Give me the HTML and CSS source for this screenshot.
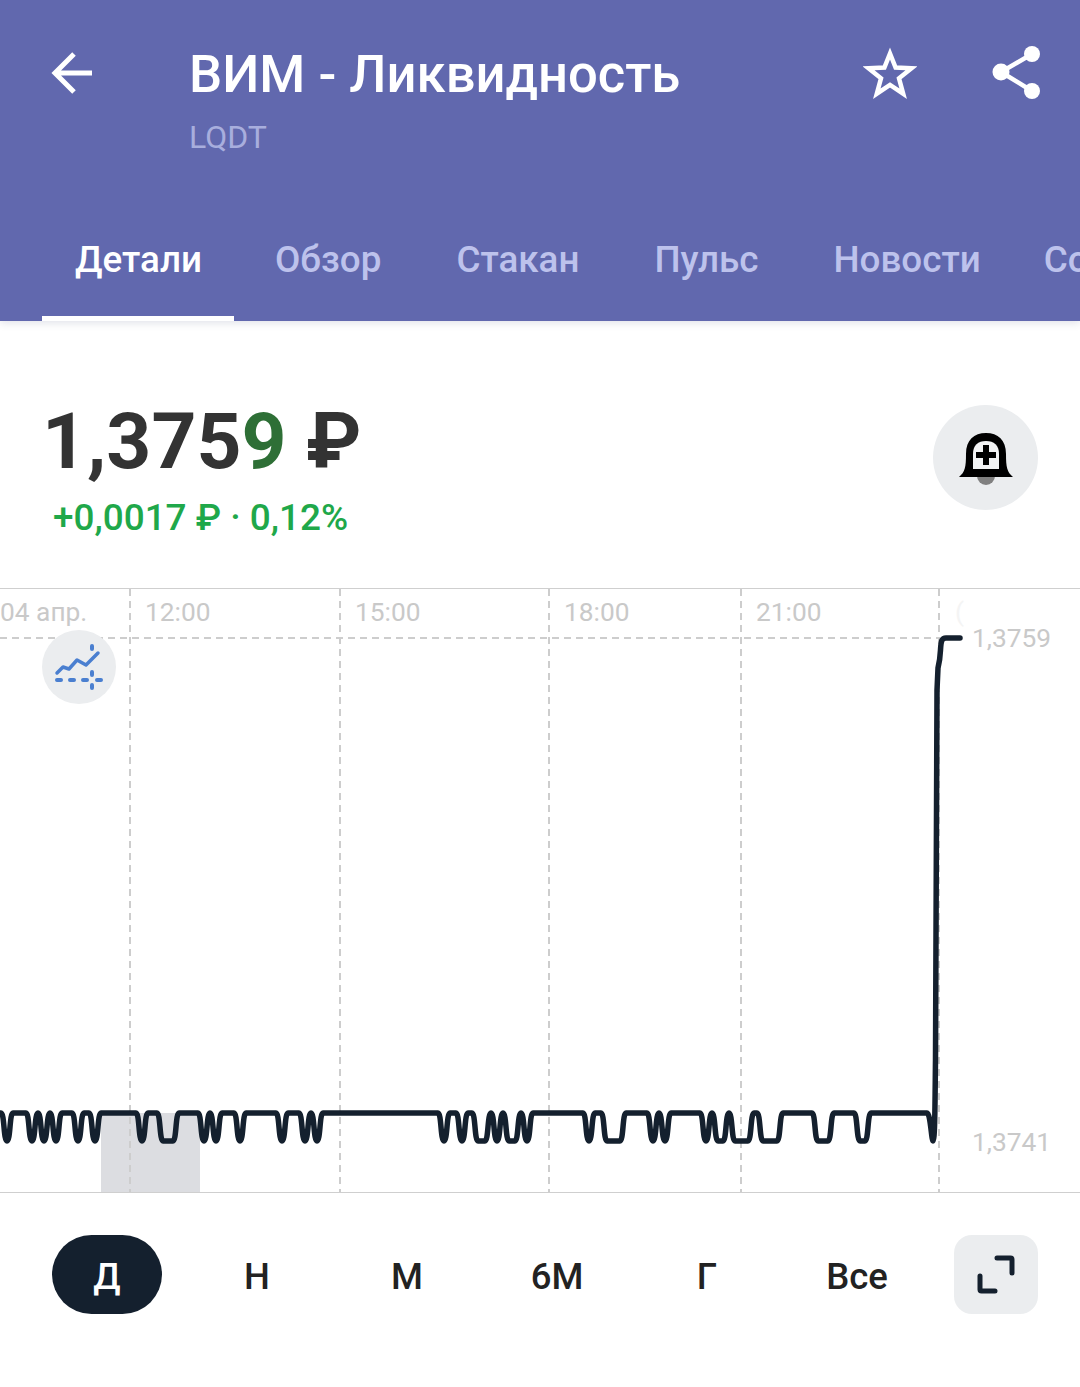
FILE: index.html
```html
<!DOCTYPE html>
<html lang="ru">
<head>
<meta charset="utf-8">
<title>ВИМ - Ликвидность</title>
<link rel="stylesheet" href="styles.css">
</head>
<body>
<header class="appbar">
  <div class="toolbar">
    <svg class="icon-back" viewBox="0 0 44 44" width="44" height="44"><path d="M42 22H6M24 3 5 22l19 19" /></svg>
    <div class="titles">
      <h1 class="title">ВИМ - Ликвидность</h1>
      <div class="ticker">LQDT</div>
    </div>
    <svg class="icon-star" viewBox="0 0 54 54" width="54" height="54"><path d="M27 7.500 32.600 21.500 48.500 22.300 36 32.300 40.200 47.700 27 38.900 13.800 47.700 18 32.300 5.500 22.300 21.400 21.500Z"/></svg>
    <svg class="icon-share" viewBox="0 0 50 50" width="50" height="50"><path class="share-line" d="M40 8 9 26l31 19"/><circle cx="40" cy="8" r="8"/><circle cx="9" cy="26" r="8.500"/><circle cx="40" cy="45" r="8"/></svg>
  </div>
  <nav class="tabs">
    <a class="tab tab-active">Детали</a>
    <a class="tab">Обзор</a>
    <a class="tab">Стакан</a>
    <a class="tab">Пульс</a>
    <a class="tab tab-tight">Новости</a>
    <a class="tab">Сообщество</a>
  </nav>
</header>

<section class="quote">
  <div class="quote-text">
    <div class="price">1,375<span class="price-last">9</span> ₽</div>
    <div class="change">+0,0017 ₽ · 0,12%</div>
  </div>
  <button class="bell-btn" aria-label="Добавить уведомление">
    <svg viewBox="0 0 56 56" width="56" height="56">
      <circle class="clapper" cx="28" cy="46" r="9"/>
      <path class="bell" d="M1 47C7 42 8 37 8 24 8 10 16 3 28 3s20 7 20 21c0 13 1 18 7 23Z"/>
      <path class="bell-in" d="M15 39V24C15 15 20 11 28 11s13 4 13 13v15Z"/>
      <path class="bell" d="M25 15h6v7h7v6h-7v7h-6v-7h-7v-6h7Z"/>
    </svg>
  </button>
</section>

<section class="chart">
  <svg class="plot" viewBox="0 588 1080 605" width="1080" height="605">
    <rect class="selection" x="101" y="1113" width="99" height="79"/>
    <path class="grid" d="M130 589V1192M340 589V1192M549 589V1192M741 589V1192M939 589V1192M0 638H940"/>
    <path class="line" d="M-5 1113H1c3.500 0 2.500 28 6 28c3.500 0 2.500-28 6-28H26c3.500 0 2.500 28 6 28c3.500 0 2.500-28 6-28c3.500 0 2.500 28 6 28c3.500 0 2.500-28 6-28c3.500 0 2.500 28 6 28c3.500 0 2.500-28 6-28H72c3.500 0 2.500 28 6 28c3.500 0 2.500-28 6-28H89c3.500 0 2.500 28 6 28c3.500 0 2.500-28 6-28H136c3.500 0 2.500 28 6 28c3.500 0 2.500-28 6-28H157c3.500 0 2.500 28 6 28H173c3.500 0 2.500-28 6-28H198c3.500 0 2.500 28 6 28c3.500 0 2.500-28 6-28c3.500 0 2.500 28 6 28c3.500 0 2.500-28 6-28H234c3.500 0 2.500 28 6 28c3.500 0 2.500-28 6-28H276c3.500 0 2.500 28 6 28c3.500 0 2.500-28 6-28H299c3.500 0 2.500 28 6 28c3.500 0 2.500-28 6-28c3.500 0 2.500 28 6 28c3.500 0 2.500-28 6-28H438c3.500 0 2.500 28 6 28c3.500 0 2.500-28 6-28H456c3.500 0 2.500 28 6 28c3.500 0 2.500-28 6-28H472c3.500 0 2.500 28 6 28H485c3.500 0 2.500-28 6-28c3.500 0 2.500 28 6 28c3.500 0 2.500-28 6-28c3.500 0 2.500 28 6 28H515c3.500 0 2.500-28 6-28c3.500 0 2.500 28 6 28c3.500 0 2.500-28 6-28H583c3.500 0 2.500 28 6 28c3.500 0 2.500-28 6-28H601c3.500 0 2.500 28 6 28H620c3.500 0 2.500-28 6-28H647c3.500 0 2.500 28 6 28c3.500 0 2.500-28 6-28c3.500 0 2.500 28 6 28c3.500 0 2.500-28 6-28H700c3.500 0 2.500 28 6 28c3.500 0 2.500-28 6-28c3.500 0 2.500 28 6 28H723c3.500 0 2.500-28 6-28c3.500 0 2.500 28 6 28H748c3.500 0 2.500-28 6-28H757c3.500 0 2.500 28 6 28H777c3.500 0 2.500-28 6-28H812c3.500 0 2.500 28 6 28H828c3.500 0 2.500-28 6-28H854c3.500 0 2.500 28 6 28H865c3.500 0 2.500-28 6-28H927c3.500 0 4.500 28 6 28C935 1141 935 1100 935.500 1060L937 690 938 668C939 664 940 660 940.500 650 941 640 942 638 946 638H960"/>
    <circle class="tool-bg" cx="79" cy="667" r="37"/>
    <path class="tool-line" d="M57 673 63 667 69 669 77 660 86 665 98 653"/>
    <path class="tool-dots" d="M92 646V649M92 672V675M92 685V688M57 680H61M70 680H74M83 680H87M97 680H101"/>
  </svg>
  <span class="axis-x axis-date">04 апр.</span>
  <span class="axis-x axis-12">12:00</span>
  <span class="axis-x axis-15">15:00</span>
  <span class="axis-x axis-18">18:00</span>
  <span class="axis-x axis-21">21:00</span>
  <span class="axis-x axis-ghost">(</span>
  <span class="axis-y axis-high">1,3759</span>
  <span class="axis-y axis-low">1,3741</span>
</section>

<nav class="ranges">
  <a class="range range-active">Д</a>
  <a class="range">Н</a>
  <a class="range">М</a>
  <a class="range">6М</a>
  <a class="range">Г</a>
  <a class="range">Все</a>
  <button class="expand" aria-label="Развернуть">
    <svg viewBox="0 0 84 79" width="84" height="79"><path d="M43 23H56.500C57.500 23 58 23.500 58 24.500V38M26 41V54.500C26 55.500 26.500 56 27.500 56H41"/></svg>
  </button>
</nav>
</body>
</html>
```
FILE: styles.css
```css
* { box-sizing: border-box; }
html, body { margin: 0; padding: 0; }
body {
  width: 1080px;
  height: 1387px;
  overflow: hidden;
  background: #fff;
  font-family: Roboto, "Noto Sans", sans-serif;
  color: #222;
}

.appbar {
  height: 321px;
  background: #6168ae;
  box-shadow: 0 2px 8px rgba(60, 70, 120, .16);
  position: relative;
  overflow: hidden;
}
.toolbar {
  display: flex;
  align-items: flex-start;
  height: 225px;
  padding: 45px 0 0 50px;
}
.icon-back { margin-top: 6px; flex: none; }
.icon-back path { fill: none; stroke: #fff; stroke-width: 5; stroke-linecap: butt; }
.titles { width: 648px; margin-left: 95px; flex: none; }
.title {
  margin: 0;
  font-size: 52.600px;
  line-height: 58px;
  font-weight: 500;
  color: #fff;
  white-space: nowrap;
}
.ticker {
  margin-top: 15px;
  font-size: 32px;
  line-height: 38px;
  color: #a8aedd;
}
.icon-star { margin: 1px 0 0 26px; flex: none; }
.icon-star path { fill: none; stroke: #fff; stroke-width: 4.500; stroke-linejoin: miter; }
.icon-share { margin: 1px 0 0 75px; flex: none; overflow: visible; }
.icon-share circle { fill: #fff; }
.share-line { fill: none; stroke: #fff; stroke-width: 4.500; }

.tabs {
  display: flex;
  height: 96px;
  margin-left: 42px;
  white-space: nowrap;
}
.tab {
  display: block;
  flex: none;
  padding: 13px 33px 0;
  margin-right: 9px;
  font-size: 36.800px;
  line-height: 44px;
  font-weight: 500;
  color: #bdc2ec;
}
.tab-active {
  width: 192px;
  margin-right: 8px;
  padding-right: 0;
  color: #fff;
  border-bottom: 5px solid #fff;
}
.tab-tight { margin-right: -3px; }

.quote {
  height: 267px;
  display: flex;
  justify-content: space-between;
  align-items: flex-start;
  padding: 84px 42px 0 42px;
}
.price {
  font-size: 78.500px;
  line-height: 72px;
  font-weight: 700;
  color: #333;
  white-space: nowrap;
}
.price-last { color: #2e6f36; }
.change {
  margin: 19px 0 0 11px;
  font-size: 36.900px;
  line-height: 44px;
  font-weight: 500;
  color: #1fa84a;
  white-space: nowrap;
}
.bell-btn {
  width: 105px;
  height: 105px;
  margin-top: 0;
  padding: 0;
  border: 0;
  border-radius: 50%;
  background: #ebedef;
  display: flex;
  align-items: center;
  justify-content: center;
}
.bell { fill: #000; }
.bell-in { fill: #f2f3f4; }
.clapper { fill: #808080; }

.chart {
  position: relative;
  height: 605px;
  border-top: 1px solid #cfcfcf;
  border-bottom: 1px solid #cfcfcf;
}
.plot { position: absolute; left: 0; top: -1px; display: block; }
.selection { fill: #dcdde1; }
.grid { fill: none; stroke: #cdcdcd; stroke-width: 2; stroke-dasharray: 7 5; }
.line { fill: none; stroke: #14202e; stroke-width: 5.500; stroke-linejoin: round; stroke-linecap: round; }
.tool-bg { fill: #ebedef; }
.tool-line { fill: none; stroke: #4a7fd0; stroke-width: 3.500; stroke-linecap: round; stroke-linejoin: round; }
.tool-dots { fill: none; stroke: #4a7fd0; stroke-width: 4; stroke-linecap: round; }

.axis-x, .axis-y {
  position: absolute;
  font-size: 26.300px;
  line-height: 32px;
  color: #c9c9c9;
  white-space: nowrap;
}
.axis-x { top: 7px; }
.axis-date { left: 0; }
.axis-12 { left: 145px; }
.axis-15 { left: 355px; }
.axis-18 { left: 564px; }
.axis-21 { left: 756px; }
.axis-ghost { left: 955px; color: #f4f4f4; }
.axis-y { left: 972px; }
.axis-high { top: 33px; }
.axis-low { top: 537px; }

.ranges {
  display: flex;
  gap: 40px;
  padding: 42px 0 0 52px;
}
.range {
  width: 110px;
  height: 79px;
  padding-top: 4px;
  border-radius: 40px;
  display: flex;
  align-items: center;
  justify-content: center;
  font-size: 36.500px;
  font-weight: 500;
  color: #222;
}
.range-active { background: #14202e; color: #fff; }
.expand {
  width: 84px;
  height: 79px;
  margin-left: 2px;
  padding: 0;
  border: 0;
  border-radius: 18px;
  background: #ebedef;
}
.expand svg { display: block; }
.expand path { fill: none; stroke: #14202e; stroke-width: 5; stroke-linecap: round; }
```
